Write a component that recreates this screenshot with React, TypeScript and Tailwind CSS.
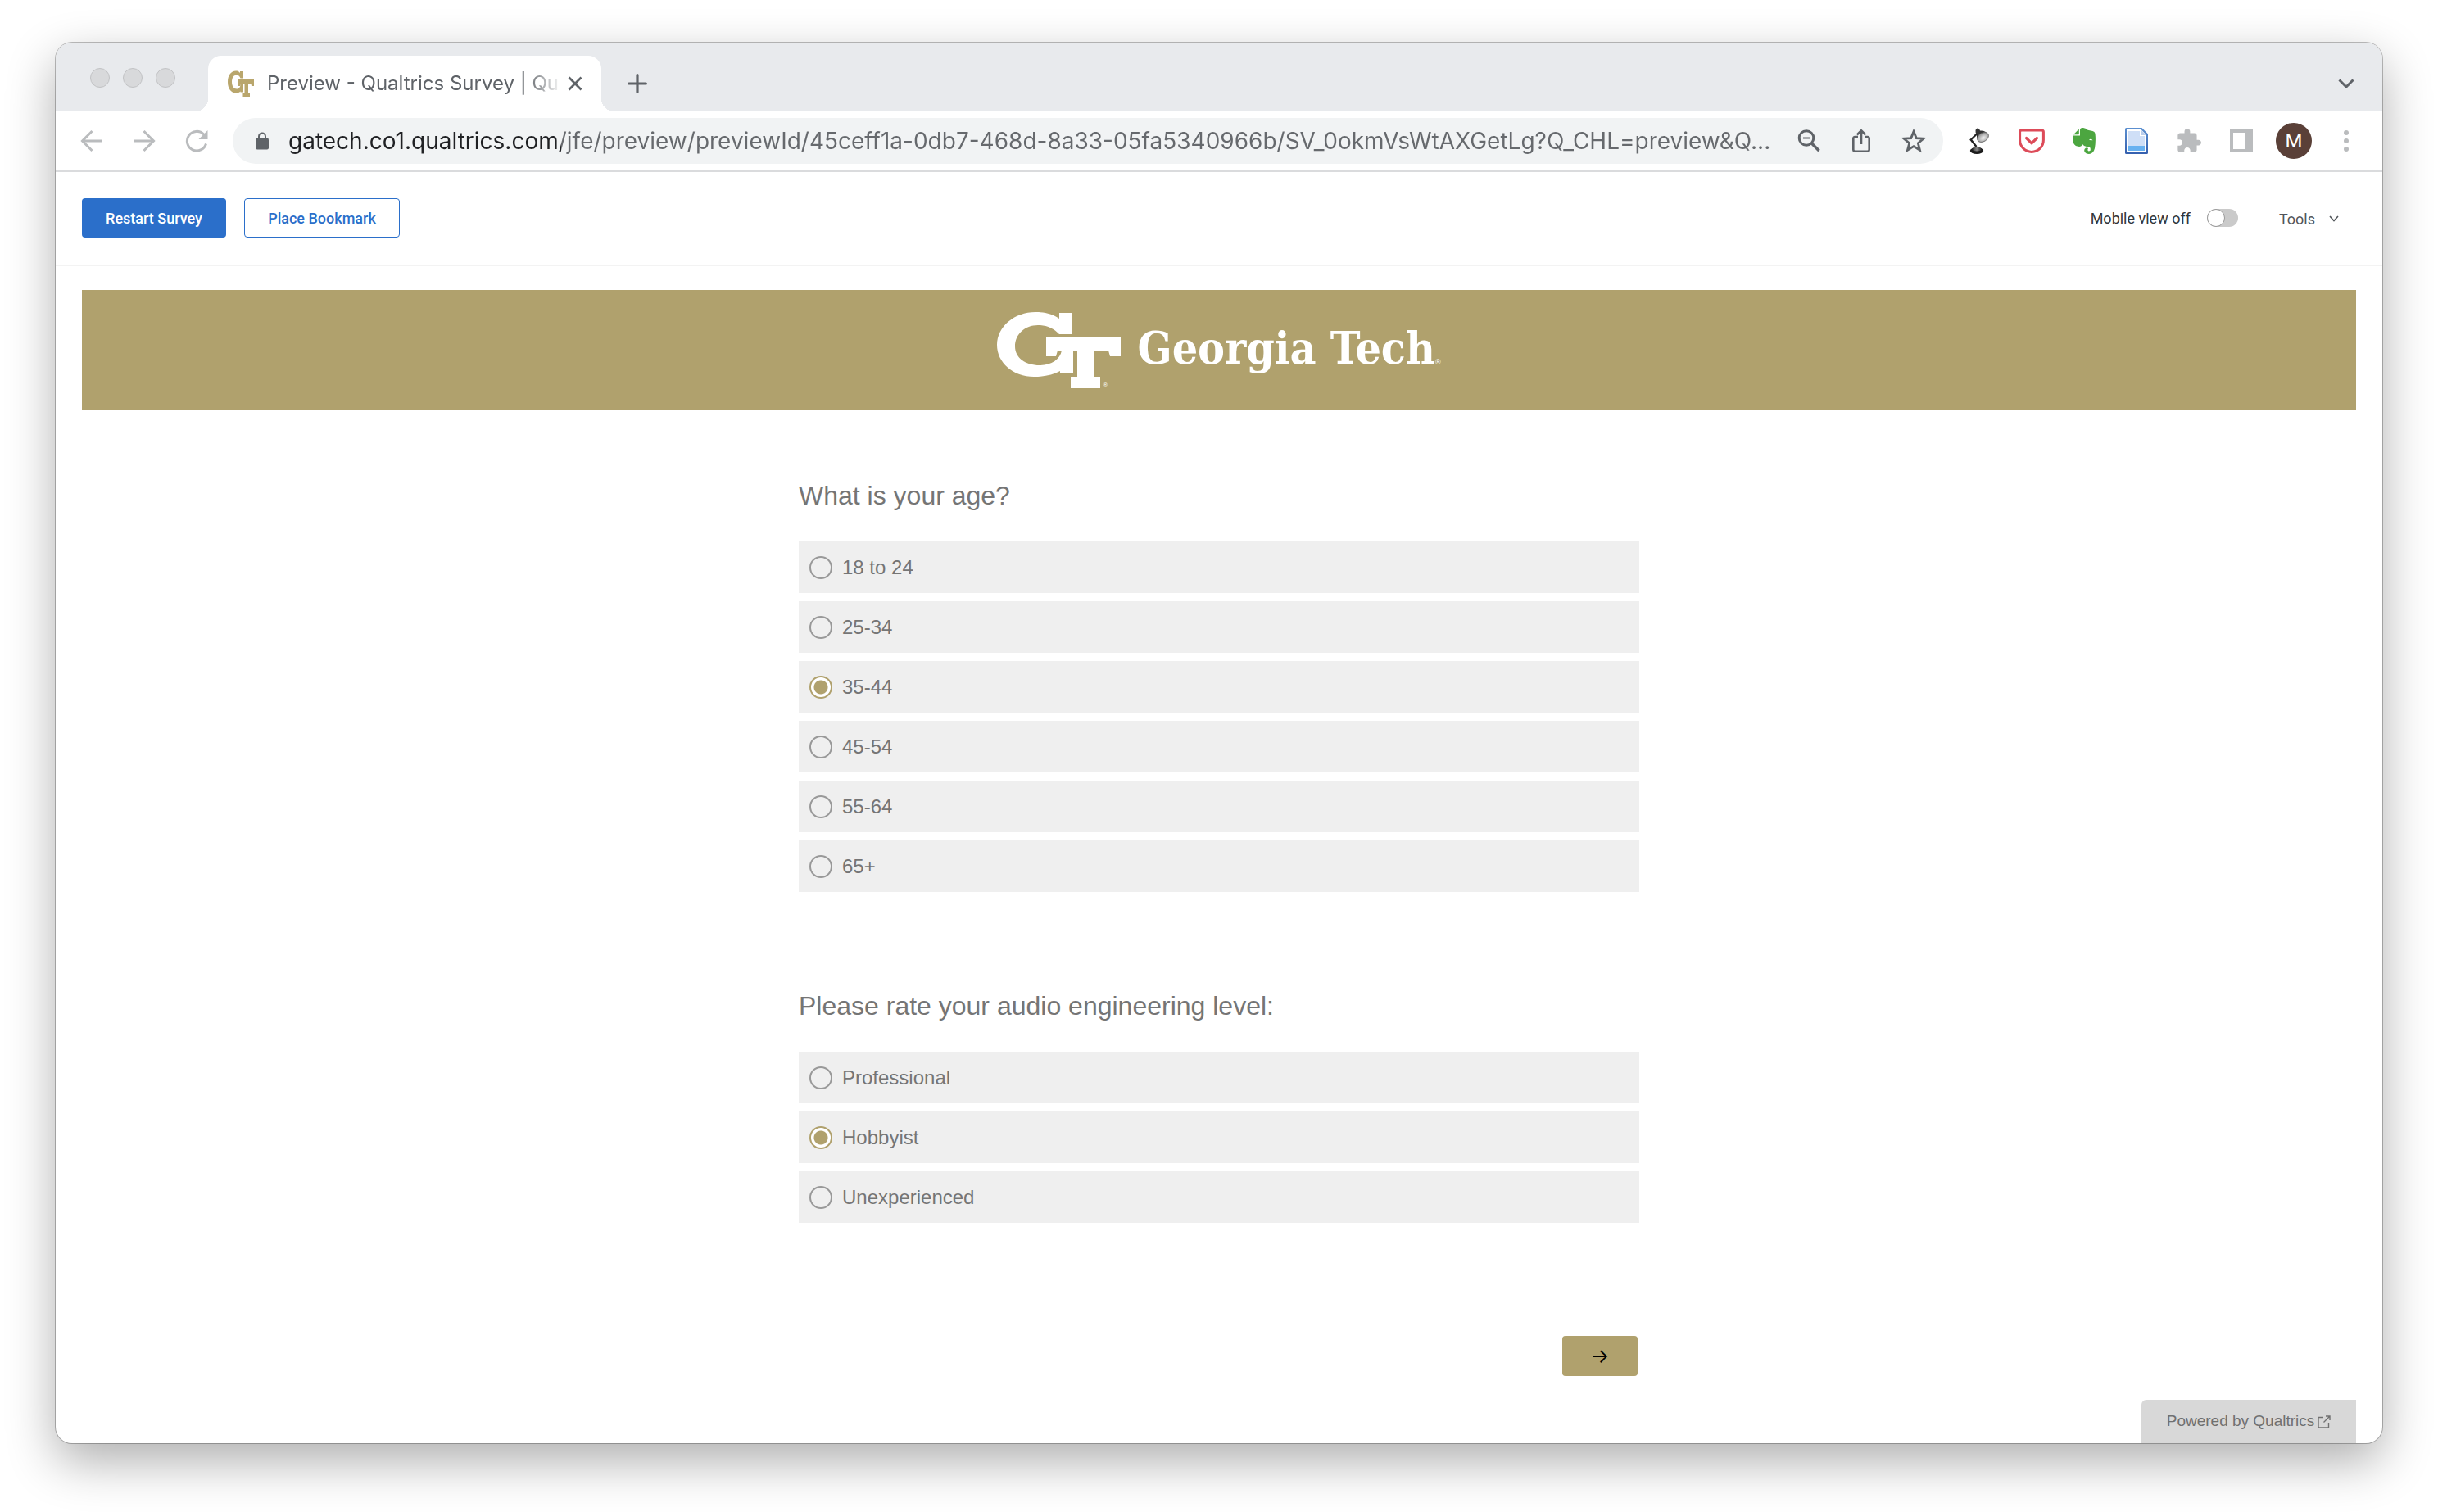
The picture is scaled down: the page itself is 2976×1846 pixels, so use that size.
import React, { useState } from "react";

const URL_TEXT =
  "gatech.co1.qualtrics.com/jfe/preview/previewId/45ceff1a-0db7-468d-8a33-05fa5340966b/SV_0okmVsWtAXGetLg?Q_CHL=preview&Q...";

function GtMark({ className, fill }: { className: string; fill: string }) {
  return (
    <svg viewBox="0 0 151 93" className={className} fill={fill} aria-hidden="true">
      <path d="M91 1H76V8C67 2 58 0 47 0C21 0 0 18 0 40C0 62 20 79 45 79C57 79 68 77 77 72V75H93V47H79C77 58 66 65 52 65C35 65 22 56 22 42C22 27 34 16 50 16C60 16 69 20 76 27H91Z" />
      <path d="M60 30H151V54H138L136 47H118V79H126V93H90V79H98V47H74L72 54H60Z" />
    </svg>
  );
}

function Favicon() {
  return (
    <svg viewBox="0 0 32 32" className="size-8 shrink-0" fill="#b9a66c" aria-hidden="true">
      <path d="M19 1H15V3C13.500 1 12 0.500 10 0.500C4 0.500 0 6 0 14C0 22 4 27.500 10 27.500C12.500 27.500 14 27 15.500 25.500V26.500H19V16H16C15.500 20 14 22.500 11 22.500C7.500 22.500 5 19 5 14C5 9 7.500 5.500 10.500 5.500C13 5.500 14.500 7 15.500 9.500H19Z" />
      <path d="M12.500 11H32V19H29L28.500 16.500H25V27.500H27V32H18.500V27.500H20.500V16.500H16L15.500 19H12.500Z" />
    </svg>
  );
}

function IconButton({ label, children }: { label: string; children: React.ReactNode }) {
  return (
    <button type="button" aria-label={label} className="flex h-14 w-16 shrink-0 items-center justify-center">
      {children}
    </button>
  );
}

const stroke = { fill: "none", stroke: "currentColor" } as const;

function TabStrip() {
  return (
    <div className="flex h-[84px] items-end rounded-t-[20px] bg-[#e8eaed] pl-[42px] pr-3">
      <div className="flex h-[84px] items-center gap-4 pb-0.5 pt-1">
        {["Close window", "Minimise window", "Zoom window"].map((name) => (
          <button
            key={name}
            type="button"
            aria-label={name}
            className="size-6 rounded-full border border-[#c2c3c5] bg-[#d8d9db]"
          />
        ))}
      </div>
      <div className="relative ml-[40px] flex h-[68px] w-[480px] items-center rounded-t-2xl bg-white pl-6 pr-4">
        <span className="absolute bottom-0 right-full size-4 bg-[radial-gradient(circle_at_0_0,transparent_16px,white_16px)]" />
        <span className="absolute bottom-0 left-full size-4 bg-[radial-gradient(circle_at_100%_0,transparent_16px,white_16px)]" />
        <Favicon />
        <span className="ml-4 flex-1 whitespace-nowrap text-[24px] leading-8 text-[#5f6368] [mask-image:linear-gradient(to_right,black_88%,transparent)]">
          Preview - Qualtrics Survey | Qu
        </span>
        <button type="button" aria-label="Close tab" className="flex size-8 shrink-0 items-center justify-center text-[#5f6368]">
          <svg viewBox="0 0 18 18" className="size-[18px]" {...stroke} strokeWidth="2.800">
            <path d="M1.500 1.500L16.500 16.500M16.500 1.500L1.500 16.500" />
          </svg>
        </button>
      </div>
      <button type="button" aria-label="New tab" className="ml-5 flex h-[68px] w-12 items-center justify-center text-[#5f6368]">
        <svg viewBox="0 0 24 24" className="size-6" {...stroke} strokeWidth="3.200" strokeLinecap="round">
          <path d="M12 1.600V22.400M1.600 12H22.400" />
        </svg>
      </button>
      <button type="button" aria-label="Search tabs" className="ml-auto flex h-[68px] w-16 items-center justify-center text-[#5f6368]">
        <svg viewBox="0 0 20 12" className="w-5" {...stroke} strokeWidth="3">
          <path d="M1.500 1.500L10 10L18.500 1.500" />
        </svg>
      </button>
    </div>
  );
}

function Toolbar() {
  return (
    <div className="flex h-[74px] items-center border-b-2 border-[#dadbdd] bg-white pl-3 pr-3">
      <div className="flex text-[#babcbe]">
        <IconButton label="Back">
          <svg viewBox="0 0 28 28" className="size-7" {...stroke} strokeWidth="3">
            <path d="M27 14H3M14.500 2L2.500 14L14.500 26" />
          </svg>
        </IconButton>
        <IconButton label="Forward">
          <svg viewBox="0 0 28 28" className="size-7" {...stroke} strokeWidth="3">
            <path d="M1 14H25M13.500 2L25.500 14L13.500 26" />
          </svg>
        </IconButton>
        <IconButton label="Reload">
          <svg viewBox="0 0 28 28" className="size-7" {...stroke} strokeWidth="3">
            <path d="M25.500 17.500A11.800 11.800 0 1 1 22.500 5.800L25 8.500" />
            <path d="M27.500 1V12H16.500Z" fill="currentColor" stroke="none" />
          </svg>
        </IconButton>
      </div>
      <div className="ml-3 flex h-14 min-w-0 flex-1 items-center rounded-full bg-[#f1f3f4] pl-7 pr-1 text-[#5f6368]">
        <svg viewBox="0 0 16 22" className="w-4 shrink-0" aria-hidden="true">
          <path d="M4 8V5.500A4 4 0 0 1 12 5.500V8" {...stroke} strokeWidth="2" />
          <rect y="7.500" width="16" height="14" rx="2" fill="currentColor" />
        </svg>
        <input
          type="text"
          aria-label="Address"
          defaultValue={URL_TEXT}
          className="ml-6 h-14 min-w-0 flex-1 bg-[linear-gradient(to_right,#202124_333px,#66696d_333px)] bg-clip-text text-[28px] text-transparent outline-none"
        />
        <IconButton label="Zoom level">
          <svg viewBox="0 0 28 28" className="size-7" {...stroke} strokeWidth="3">
            <circle cx="11" cy="10.500" r="8.800" />
            <path d="M17.500 17L26.500 26" strokeWidth="3.500" />
            <path d="M7 10.500H15" strokeWidth="2" />
          </svg>
        </IconButton>
        <IconButton label="Share">
          <svg viewBox="0 0 24 30" className="w-6" {...stroke} strokeWidth="2.600">
            <path d="M8 10H4.500Q2.300 10 2.300 12.200V25.500Q2.300 27.700 4.500 27.700H19.500Q21.700 27.700 21.700 25.500V12.200Q21.700 10 19.500 10H16" />
            <path d="M12 19V2.500M6.800 7.500L12 2.300L17.200 7.500" />
          </svg>
        </IconButton>
        <IconButton label="Bookmark this page">
          <svg viewBox="0 0 30 30" className="size-[30px]" {...stroke} strokeWidth="2.800">
            <path d="M15 3.500L18.200 11.600L27 12.200L20.300 17.800L22.500 26.300L15 21.600L7.500 26.300L9.700 17.800L3 12.200L11.800 11.600Z" />
          </svg>
        </IconButton>
      </div>
      <div className="ml-3 flex text-[#babcbe]">
        <IconButton label="Desk lamp extension">
          <svg viewBox="0 0 24 32" className="w-6">
            <defs>
              <radialGradient id="shade" cx="0.5" cy="0.6" r="0.6">
                <stop offset="0" stopColor="#f4f4f4" />
                <stop offset="1" stopColor="#8a8a8a" />
              </radialGradient>
              <linearGradient id="base" x1="0" x2="1">
                <stop offset="0" stopColor="#222" />
                <stop offset="0.5" stopColor="#888" />
                <stop offset="1" stopColor="#222" />
              </linearGradient>
            </defs>
            <path d="M7.500 3Q8 0 10.500 0.500Q12.500 1 13 3.500Q20 3 22.500 8L12 17Q8.500 14 9 8.500Q7 6 7.500 3Z" fill="#333" />
            <ellipse cx="16.500" cy="11.500" rx="7.500" ry="5.200" transform="rotate(-32 16.500 11.500)" fill="url(#shade)" stroke="#666" strokeWidth="0.800" />
            <path d="M9 7.500L1.800 14.500L8.500 23" fill="none" stroke="#222" strokeWidth="2.400" />
            <ellipse cx="9" cy="28" rx="8.200" ry="4" fill="#1c1c1c" />
            <ellipse cx="9" cy="26" rx="6" ry="2.600" fill="url(#base)" />
          </svg>
        </IconButton>
        <IconButton label="Save to Pocket">
          <svg viewBox="0 0 32 30" className="w-8" fill="none" stroke="#dd4b59" strokeWidth="3" strokeLinecap="round" strokeLinejoin="round">
            <path d="M1.600 4Q1.600 2 3.600 2H28.400Q30.400 2 30.400 4V14A14.400 14.400 0 0 1 1.600 14Z" />
            <path d="M9.500 11.500L16 17.800L22.500 11.500" strokeWidth="3.200" />
          </svg>
        </IconButton>
        <IconButton label="Web clipper">
          <svg viewBox="0 0 28 32" className="w-7" fill="#4ca640">
            <path d="M9 2.500V9.500H1L0.300 11Q-0.300 15 1.500 19.500Q3 22.500 8 23Q11 23 12 20Q13.500 22.500 17 23L20.500 23.500Q22.500 24.500 21.500 28L19.500 28.500Q17.500 27.500 19 25.500Q18 23.500 15.800 24.800Q13.500 26.500 14.500 29Q16 32 20 32Q25.500 31.500 27 25Q28.500 16 27.500 7Q27 4.500 24.500 4L18.500 2.800Q17 0.500 13 0Q9.500-0.500 9 2.500Z" />
            <path d="M7.800 1.500V7.300Q7.800 8.200 7 8.200H1Z" />
            <path d="M20 15Q22 12.500 24.500 15.300Z" fill="#fff" />
          </svg>
        </IconButton>
        <IconButton label="Document extension">
          <svg viewBox="0 0 28 32" className="w-7">
            <defs>
              <linearGradient id="page" x1="0" y1="0" x2="0" y2="1">
                <stop offset="0" stopColor="#5b8fd0" />
                <stop offset="1" stopColor="#355fae" />
              </linearGradient>
            </defs>
            <path d="M1.500 0H20.500L28 7.500V30.500Q28 32 26.500 32H1.500Q0 32 0 30.500V1.500Q0 0 1.500 0Z" fill="url(#page)" />
            <path d="M2 2H19.500L26 8.500V30H2Z" fill="#fff" />
            <path d="M4 4H18V10H24V28H4Z" fill="#cfdff7" />
            <path d="M20 3L26 9H20Z" fill="#b9cdeb" />
            <path d="M4 22H24V28H4Z" fill="#68b1f0" />
          </svg>
        </IconButton>
        <IconButton label="Extensions">
          <svg viewBox="1 1 22 22" className="size-[30px]" fill="currentColor">
            <path d="M20.500 11H19V7c0-1.100-.900-2-2-2h-4V3.500C13 2.120 11.880 1 10.500 1S8 2.120 8 3.500V5H4c-1.100 0-1.990.900-1.990 2v3.800H3.500c1.490 0 2.700 1.210 2.700 2.700s-1.210 2.700-2.700 2.700H2V20c0 1.100.900 2 2 2h3.800v-1.500c0-1.490 1.210-2.700 2.700-2.700 1.490 0 2.700 1.210 2.700 2.700V22H17c1.100 0 2-.900 2-2v-4h1.500c1.380 0 2.500-1.120 2.500-2.500S21.880 11 20.500 11z" />
          </svg>
        </IconButton>
        <IconButton label="Side panel">
          <svg viewBox="0 0 28 28" className="size-7" fill="currentColor">
            <path fillRule="evenodd" d="M0 0H28V28H0ZM4 4V24H18V4Z" />
          </svg>
        </IconButton>
        <IconButton label="Profile">
          <span className="flex size-11 items-center justify-center rounded-full bg-[#5a4038] font-[Roboto] text-[24px] text-white">
            M
          </span>
        </IconButton>
        <IconButton label="Menu">
          <svg viewBox="0 0 6 26" className="w-1.5" fill="currentColor">
            <circle cx="3" cy="3" r="3" />
            <circle cx="3" cy="13" r="3" />
            <circle cx="3" cy="23" r="3" />
          </svg>
        </IconButton>
      </div>
    </div>
  );
}

function PreviewBar() {
  const [mobile, setMobile] = useState(false);
  return (
    <div className="flex h-[115px] items-start border-b-2 border-[#f3f3f3] px-8 pt-8 font-[Roboto] text-[18px]">
      <button type="button" className="flex h-12 w-44 items-center justify-center rounded bg-[#2b6fca] font-medium text-white">
        Restart Survey
      </button>
      <button
        type="button"
        className="ml-[22px] flex h-12 w-[190px] items-center justify-center rounded border border-[#2b6fca] font-medium text-[#2b6fca]"
      >
        Place Bookmark
      </button>
      <label className="ml-auto flex h-12 items-center gap-5 text-[#32363a]">
        Mobile view off
        <input
          type="checkbox"
          role="switch"
          checked={mobile}
          onChange={(e) => setMobile(e.target.checked)}
          className="h-[22px] w-[38px] appearance-none rounded-full bg-[#cacaca] before:block before:size-[22px] before:rounded-full before:border before:border-[#999] before:bg-white checked:before:ml-4"
        />
      </label>
      <button type="button" className="ml-[50px] mr-5 flex h-[50px] items-center gap-4 text-[#51555a]">
        Tools
        <svg viewBox="0 0 14 10" className="w-3.5" {...stroke} strokeWidth="1.600">
          <path d="M2 2L7 7.500L12 2" />
        </svg>
      </button>
    </div>
  );
}

function Banner() {
  return (
    <div className="mx-8 mt-[29px] flex h-[147px] items-start justify-center bg-[#b0a16d] pt-[27px] text-white">
      <div className="relative">
        <GtMark className="w-[151px]" fill="#fff" />
        <span className="absolute bottom-0 left-[129px] text-[8px] leading-none">®</span>
      </div>
      <span className="ml-5 mt-1.5 whitespace-nowrap font-['DejaVu_Serif_Condensed','DejaVu_Serif',serif] text-[55px] font-bold leading-[76px]">
        Georgia Tech
      </span>
      <span className="mt-[57px] text-[9px] leading-none">®</span>
    </div>
  );
}

function Question({ name, title, options, initial }: { name: string; title: string; options: string[]; initial: string }) {
  const [value, setValue] = useState(initial);
  return (
    <fieldset>
      <legend className="text-[32px] leading-10 text-[#757575]">{title}</legend>
      <div className="mt-9 flex flex-col gap-2.5">
        {options.map((option) => (
          <label key={option} className="flex h-[63px] items-center bg-[#efefef] pl-[13px] text-[24px] text-[#757575]">
            <input
              type="radio"
              name={name}
              value={option}
              checked={value === option}
              onChange={() => setValue(option)}
              className="mr-3 size-7 shrink-0 appearance-none rounded-full border-2 border-[#999] checked:border-[#b0a16d] checked:bg-[radial-gradient(circle,#b0a16d_8px,white_9px)]"
            />
            {option}
          </label>
        ))}
      </div>
    </fieldset>
  );
}

export default function App() {
  return (
    <div className="flex min-h-screen flex-col bg-white px-[68px] pb-[84px] pt-[52px] font-['Liberation_Sans',Arial,sans-serif]">
      <div className="flex flex-1 flex-col rounded-[20px] bg-white shadow-[0_0_0_1px_rgba(0,0,0,0.25),0_22px_60px_rgba(0,0,0,0.32)]">
        <header className="font-[Inter,sans-serif]">
          <TabStrip />
          <Toolbar />
        </header>
        <main className="flex flex-1 flex-col">
          <PreviewBar />
          <Banner />
          <form className="mx-auto mt-[84px] w-full max-w-[1026px]" onSubmit={(e) => e.preventDefault()}>
            <Question
              name="age"
              title="What is your age?"
              options={["18 to 24", "25-34", "35-44", "45-54", "55-64", "65+"]}
              initial="35-44"
            />
            <div className="mt-[119px]">
              <Question
                name="level"
                title="Please rate your audio engineering level:"
                options={["Professional", "Hobbyist", "Unexperienced"]}
                initial="Hobbyist"
              />
            </div>
            <div className="mt-[138px] flex justify-end pr-0.5">
              <button
                type="submit"
                aria-label="Next"
                className="flex h-[49px] w-[92px] items-center justify-center rounded bg-[#b0a16d] font-[Inter] text-[24px] text-black"
              >
                →
              </button>
            </div>
          </form>
          <a
            href="#qualtrics"
            className="ml-auto mr-8 mt-auto flex h-[53px] w-[262px] items-center justify-center gap-1 rounded-tl-md bg-[#d8d8d8] text-[19px] text-[#707070]"
          >
            Powered by Qualtrics
            <svg viewBox="0 0 16 16" className="size-4" {...stroke} strokeWidth="1.400">
              <path d="M7 2.500H1V15H13.500V9M10 1H15V6M15 1L7.500 8.500" />
            </svg>
          </a>
        </main>
      </div>
    </div>
  );
}
